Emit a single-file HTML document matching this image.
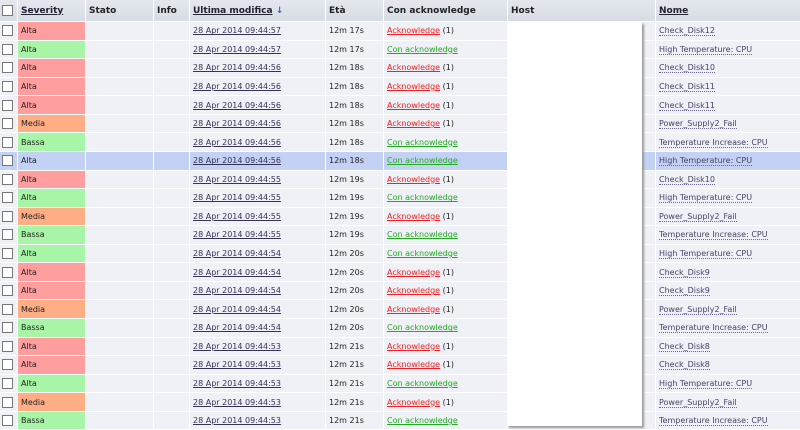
<!DOCTYPE html>
<html><head><meta charset="utf-8"><style>
body{margin:0;width:800px;height:429px;overflow:hidden;background:#fff;font-family:"DejaVu Sans","Liberation Sans",sans-serif;font-size:8px;color:#222}
table{border-collapse:separate;border-spacing:1px;position:absolute;left:-1px;top:-1px;table-layout:fixed;width:802px}
td,th{height:17.57px;padding:0 0 0 3px;background:#f0f0f7;white-space:nowrap;overflow:hidden;text-align:left}
th{height:21px;background:linear-gradient(#e4e8ee,#d6dce4);font-size:9px;font-weight:bold;color:#222}
th u{color:#223}
a{color:#335;text-decoration:underline}
.r{color:#e22}.g{color:#2a2}
.red{background:#ff9e9e}.grn{background:#a8f5a8}.org{background:#ffad85}
tr.h td{background:#c3d1f5}
.cb{width:9px;height:9px;border:1px solid #777;background:#fff;display:inline-block;margin-left:0px;vertical-align:middle}
.n a{color:#446;text-decoration:none;border-bottom:1px dotted #669}
#dd{position:absolute;left:507px;top:22px;width:135px;height:404px;background:#fff;box-shadow:2px 2px 2px #999}
</style></head><body>
<table>
<colgroup><col style="width:17px"><col style="width:67px"><col style="width:67px"><col style="width:35px"><col style="width:135px"><col style="width:57px"><col style="width:123px"><col style="width:147px"><col></colgroup>
<tr><th style="padding-left:2px"><span class="cb"></span></th><th><u>Severity</u></th><th>Stato</th><th>Info</th><th><u>Ultima modifica</u> <span style="color:#36c">↓</span></th><th>Età</th><th>Con acknowledge</th><th>Host</th><th><u>Nome</u></th></tr>
<tbody id="b"></tbody>
</table>
<div id="dd"></div>
<script>
var d=[["Alta","red","57","12m 17s",0,"Check_Disk12"],["Alta","grn","57","12m 17s",1,"High Temperature: CPU"],["Alta","red","56","12m 18s",0,"Check_Disk10"],["Alta","red","56","12m 18s",0,"Check_Disk11"],["Alta","red","56","12m 18s",0,"Check_Disk11"],["Media","org","56","12m 18s",0,"Power_Supply2_Fail"],["Bassa","grn","56","12m 18s",1,"Temperature Increase: CPU"],["Alta","grn","56","12m 18s",1,"High Temperature: CPU"],["Alta","red","55","12m 19s",0,"Check_Disk10"],["Alta","grn","55","12m 19s",1,"High Temperature: CPU"],["Media","org","55","12m 19s",0,"Power_Supply2_Fail"],["Bassa","grn","55","12m 19s",1,"Temperature Increase: CPU"],["Alta","grn","54","12m 20s",1,"High Temperature: CPU"],["Alta","red","54","12m 20s",0,"Check_Disk9"],["Alta","red","54","12m 20s",0,"Check_Disk9"],["Media","org","54","12m 20s",0,"Power_Supply2_Fail"],["Bassa","grn","54","12m 20s",1,"Temperature Increase: CPU"],["Alta","red","53","12m 21s",0,"Check_Disk8"],["Alta","red","53","12m 21s",0,"Check_Disk8"],["Alta","grn","53","12m 21s",1,"High Temperature: CPU"],["Media","org","53","12m 21s",0,"Power_Supply2_Fail"],["Bassa","grn","53","12m 21s",1,"Temperature Increase: CPU"]];
var h="";d.forEach(function(r,i){h+='<tr'+(i==7?' class="h"':'')+'><td style="padding-left:2px"><span class="cb"></span></td><td class="'+r[1]+'">'+r[0]+'</td><td></td><td></td><td><a>28 Apr 2014 09:44:'+r[2]+'</a></td><td>'+r[3]+'</td><td>'+(r[4]?'<a class="g">Con acknowledge</a>':'<a class="r">Acknowledge</a> (1)')+'</td><td></td><td class="n"><a>'+r[5]+'</a></td></tr>'});document.getElementById("b").innerHTML=h;
</script>
</body></html>
